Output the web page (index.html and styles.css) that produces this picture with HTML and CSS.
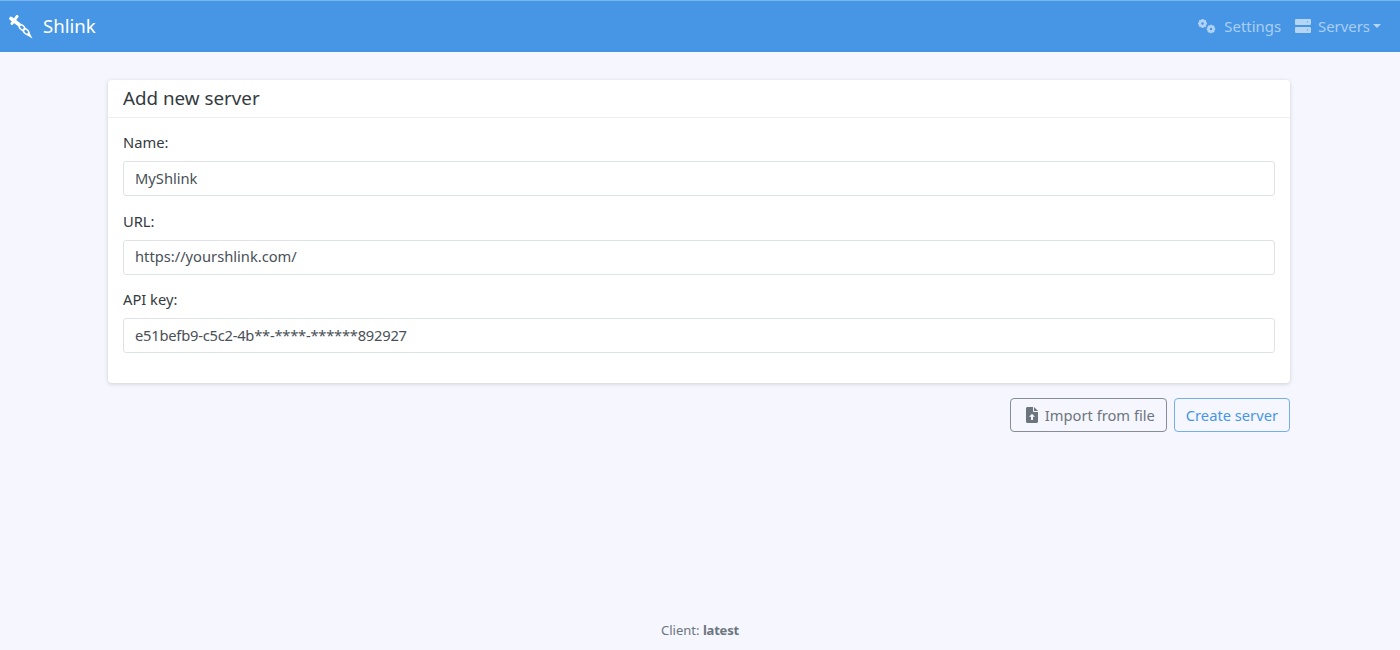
FILE: index.html
```html
<!DOCTYPE html>
<html lang="en">
<head>
<meta charset="utf-8">
<title>Shlink</title>
<link rel="stylesheet" href="styles.css">
</head>
<body>
<header class="navbar">
  <a class="brand">
    <svg class="logo" viewBox="0 0 24 24" width="24" height="24" aria-hidden="true">
      <path class="logo-bar" d="M2 3.500 10 9.500"/>
      <path class="logo-cross" d="M8 1.500 3 8.500"/>
      <ellipse class="logo-link" cx="13" cy="12.500" rx="3.300" ry="2" transform="rotate(45 13 12.500)"/>
      <ellipse class="logo-link" cx="17" cy="16.500" rx="3.300" ry="2" transform="rotate(45 17 16.500)"/>
      <path class="logo-fill" d="M17.500 20 20.300 17.200 23.500 23.500Z"/>
    </svg>
    <span>Shlink</span>
  </a>
  <nav class="nav">
    <a class="nav-link">
      <svg class="gears" viewBox="0 0 19 16" width="19" height="16" aria-hidden="true">
        <circle class="ring" cx="5.500" cy="5.500" r="2.600"/>
        <path class="teeth" d="M5.500 1v1.500M5.500 8.500V10M1 5.500h1.500M8.500 5.500H10M2.300 2.300l1.100 1.100M7.600 7.600l1.100 1.100M2.300 8.700l1.100-1.100M7.600 3.400l1.100-1.100"/>
        <circle class="ring" cx="14" cy="11" r="2.500"/>
        <path class="teeth" d="M14 6.800v1.400M14 13.800v1.400M9.800 11h1.400M16.800 11h1.400M11 8l1 1M16 13l1 1M11 14l1-1M16 9l1-1"/>
      </svg>
      <span>Settings</span>
    </a>
    <a class="nav-link">
      <svg class="servers" viewBox="0 0 16 14" width="16" height="14" aria-hidden="true">
        <path class="server-shape" fill-rule="evenodd" d="M1 0h14a1 1 0 0 1 1 1v4a1 1 0 0 1-1 1H1a1 1 0 0 1-1-1V1a1 1 0 0 1 1-1Zm0 8h14a1 1 0 0 1 1 1v4a1 1 0 0 1-1 1H1a1 1 0 0 1-1-1V9a1 1 0 0 1 1-1Zm11-5.500v1h1v-1Zm0 8v1h1v-1Z"/>
      </svg>
      <span>Servers</span>
      <i class="caret"></i>
    </a>
  </nav>
</header>

<main class="content">
  <form class="form">
    <section class="card">
      <h1 class="card-header">Add new server</h1>
      <div class="card-body">
        <div class="field">
          <label class="label" for="name">Name:</label>
          <input class="input" id="name" type="text" value="MyShlink">
        </div>
        <div class="field">
          <label class="label" for="url">URL:</label>
          <input class="input" id="url" type="text" value="https://yourshlink.com/">
        </div>
        <div class="field">
          <label class="label" for="key">API key:</label>
          <input class="input input-key" id="key" type="text" value="e51befb9-c5c2-4b**-****-******892927">
        </div>
      </div>
    </section>
    <div class="actions">
      <button class="btn btn-grey" type="button">
        <svg viewBox="0 0 12 16" width="12" height="16" aria-hidden="true">
          <path class="file-icon" fill-rule="evenodd" d="M1.500 0H7v4.200c0 .5.3.8.8.8H12v9.500c0 .8-.7 1.500-1.500 1.500h-9C.7 16 0 15.300 0 14.500v-13C0 .7.700 0 1.500 0ZM8 0l4 4H8ZM6 6.800 3 9.800h2V13h2V9.800h2Z"/>
        </svg>
        <span>Import from file</span>
      </button>
      <button class="btn btn-blue" type="button">Create server</button>
    </div>
  </form>
</main>

<footer class="footer">Client: <strong>latest</strong></footer>
</body>
</html>
```

FILE: styles.css
```css
* { box-sizing: border-box; }
html, body { margin: 0; height: 100%; }
body {
  display: flex;
  flex-direction: column;
  height: 650px;
  overflow: hidden;
  background: #f5f6fe;
  color: #343a40;
  font-family: "Noto Sans", "Open Sans", sans-serif;
  font-size: 15px;
}
.navbar {
  height: 52px;
  flex: none;
  display: flex;
  align-items: center;
  justify-content: space-between;
  padding: 0 19px 2px 9px;
  background: #4696e5;
  border-top: 1px solid #79b4ec;
}
.brand { display: flex; align-items: center; gap: 10px; color: #fff; font-size: 18.600px; }
.logo { margin-top: 2px; }
.logo-fill { fill: #fff; }
.logo-bar { fill: none; stroke: #fff; stroke-width: 3.600; stroke-linecap: round; }
.logo-cross { fill: none; stroke: #fff; stroke-width: 3; stroke-linecap: round; }
.logo-link { fill: none; stroke: #fff; stroke-width: 1.500; }
.nav { display: flex; align-items: center; gap: 14px; }
.nav-link { display: flex; align-items: center; gap: 7px; color: rgba(255,255,255,.55); font-size: 14.900px; }
.gears { display: block; margin-right: 1px; }
.ring { fill: none; stroke: #b0d2f4; stroke-width: 2.600; }
.teeth { fill: none; stroke: #b0d2f4; stroke-width: 1.800; }
.server-shape { fill: #b5d5f5; }
.caret {
  width: 0;
  height: 0;
  margin-left: -4px;
  border-top: 4.500px solid #b5d5f5;
  border-left: 4.500px solid transparent;
  border-right: 4.500px solid transparent;
}
.content { flex: 1; padding: 28px 110px 0 108px; }
.card {
  height: 303px;
  background: #fff;
  border-radius: 4px;
  box-shadow: 0 1px 4px rgba(0,0,0,.16);
}
.card-header {
  margin: 0;
  height: 38px;
  padding: 0 15px 2px;
  display: flex;
  align-items: center;
  border-bottom: 1px solid #eceef2;
  font-size: 18.800px;
  font-weight: 400;
}
.card-body { padding: 12px 15px 0; display: flex; flex-direction: column; gap: 10.500px; }
.label { display: block; height: 31px; padding-top: 2px; font-size: 14.700px; }
.input {
  display: block;
  width: 100%;
  height: 35px;
  padding: 0 11px 2px;
  border: 1px solid #dfe2e8;
  border-radius: 3px;
  background: #fff;
  color: #495057;
  font: inherit;
  font-size: 14.700px;
  outline: none;
}
.input-key { letter-spacing: -.22px; }
.field { height: 68px; }
.actions { display: flex; justify-content: flex-end; gap: 7px; margin-top: 15px; }
.btn {
  display: flex;
  align-items: center;
  gap: 7px;
  height: 34px;
  padding: 0 11px;
  border-radius: 4px;
  background: transparent;
  font: inherit;
  font-size: 14.700px;
}
.btn-grey { border: 1px solid #868d94; color: #6c757d; padding: 0 11px 0 15px; }
.file-icon { fill: #6c757d; }
.btn-blue { border: 1px solid #72aeea; color: #4696e5; }
.footer {
  flex: none;
  padding-bottom: 11px;
  text-align: center;
  color: #6c757d;
  font-size: 13px;
}
.footer strong { font-weight: 700; letter-spacing: -.2px; }
```
